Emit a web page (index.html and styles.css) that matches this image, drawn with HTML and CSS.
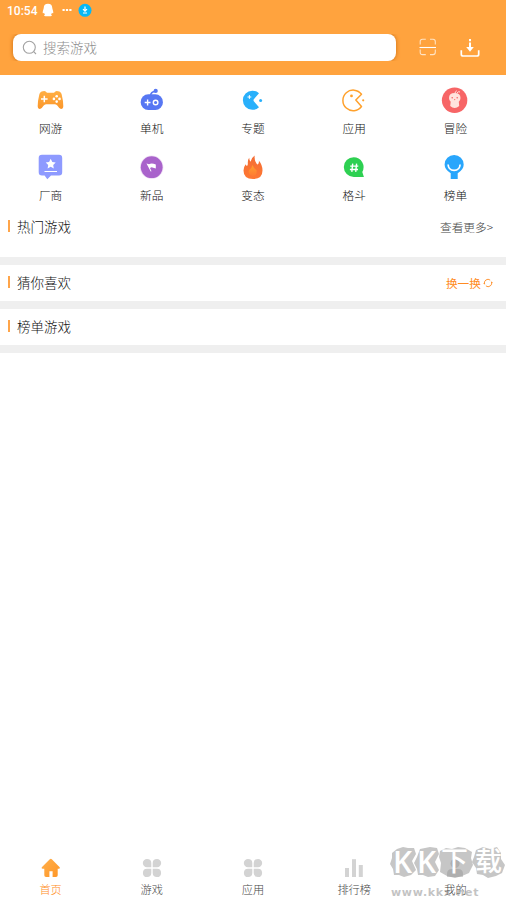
FILE: index.html
```html
<!DOCTYPE html>
<html lang="zh-CN">
<head>
<meta charset="utf-8">
<title>游戏</title>
<link rel="stylesheet" href="styles.css">
</head>
<body>
<div class="app">
  <header class="header">
    <div class="status">
      <span class="time">10:54</span>
      <svg class="penguin" width="12" height="14" viewBox="0 0 12 14"><path fill="#fff" d="M6 .8C3.200.8 1.800 2.300 1.800 4.500C1.800 6 .8 7.300.7 9.500C.7 10.600 1.300 10.500 2 9.800C2.200 10.700 2.600 11.200 3 11.600C1.600 12.200 2 13.300 3.500 13.300L8.500 13.300C10 13.300 10.400 12.200 9 11.600C9.400 11.200 9.800 10.700 10 9.800C10.700 10.500 11.300 10.600 11.300 9.500C11.200 7.300 10.200 6 10.200 4.500C10.200 2.300 8.800.8 6 .8Z"/></svg>
      <svg class="dots" width="10" height="4" viewBox="0 0 10 4" fill="#fff"><rect x=".5" y="0" width="2.200" height="2"/><rect x="3.900" y="0" width="2.200" height="2"/><rect x="7.300" y="0" width="2.200" height="2"/></svg>
      <svg class="badge" width="14" height="14" viewBox="0 0 14 14"><circle cx="7" cy="7.300" r="6.500" fill="#08b8f5"/><path d="M7 3.500V8M5 6.200L7 8.200L9 6.200M5 10H9" stroke="#fff" stroke-width="1.200" fill="none"/></svg>
    </div>
    <div class="tools">
      <div class="search">
        <svg width="16" height="16" viewBox="0 0 16 16" fill="none" stroke="#a2a2a2" stroke-width="1.100"><circle cx="7.300" cy="7.300" r="6"/><path d="M11.700 11.700L14 14"/></svg>
        <span>搜索游戏</span>
      </div>
      <svg class="scan" width="18" height="18" viewBox="0 0 18 18" fill="none" stroke="#ffe3c4" stroke-width="1.100"><path d="M1.200 6.500V3.500Q1.200 1.200 3.500 1.200H6.800M11 1.200H14Q16.300 1.200 16.300 3.500V6.500M16.300 11.500V14.300Q16.300 16.600 14 16.600H11M6.800 16.600H3.500Q1.200 16.600 1.200 14.300V11.500"/><path d="M.5 9.500H17" stroke="#fff"/></svg>
      <svg class="down" width="20" height="20" viewBox="0 0 20 20" fill="none" stroke="#fff"><path d="M1.300 12.300V16.200Q1.300 18 3.100 18H16.900Q18.700 18 18.700 16.200V12.300" stroke-width="1.700"/><path d="M10 1V3.200M10 4.500V10" stroke-width="2"/><path d="M6.200 9H13.800L10 13.800Z" fill="#fff" stroke="none"/></svg>
    </div>
  </header>

  <nav class="grid">
    <a class="cell"><svg viewBox="0 0 32 32"><defs><linearGradient id="pad" x2="0" y2="1"><stop stop-color="#ffaf45"/><stop offset="1" stop-color="#fb962a"/></linearGradient></defs><path fill="url(#pad)" d="M8 7.200Q10 6.700 11.200 8L12 8.800H19L19.800 8Q21 6.700 23 7.200Q26 7.500 26.700 10.500Q28.300 17 28.300 22Q28.300 25 26 25Q24.500 25 22.500 21.800Q21.500 20.300 20 20.300H11Q9.500 20.300 8.500 21.800Q6.500 25 5 25Q2.700 25 2.700 22Q2.700 17 4.300 10.500Q5 7.500 8 7.200Z"/><path d="M6 15H12.600M9.300 11.700V18.300" stroke="#fff" stroke-width="1.500"/><g fill="#fff"><circle cx="21.700" cy="12.200" r="1.300"/><circle cx="21.700" cy="17.600" r="1.300"/><circle cx="18.900" cy="14.900" r="1.300"/><circle cx="24.500" cy="14.900" r="1.300"/></g></svg><span>网游</span></a>
    <a class="cell"><svg viewBox="0 0 32 32"><rect x="4.700" y="10.300" width="22.200" height="15.700" rx="7.600" fill="#5777f3"/><path d="M14.500 11.500Q14.800 8 19.500 7.300" fill="none" stroke="#5777f3" stroke-width="1.500"/><circle cx="19.700" cy="6.900" r="2.100" fill="#5777f3"/><path d="M8.700 18.500H14.500M11.600 15.600V21.400" stroke="#fff" stroke-width="1.400"/><circle cx="19.600" cy="18.500" r="2.300" fill="none" stroke="#fff" stroke-width="1.400"/></svg><span>单机</span></a>
    <a class="cell"><svg viewBox="0 0 32 32"><path fill="#29b0fb" d="M22 9.200L16.800 15.300Q16.200 16.300 16.800 17.300L22 23.300A9.600 9.600 0 1 1 22 9.200Z"/><circle cx="23.600" cy="16.400" r="1.500" fill="#29b0fb"/><path d="M10.500 13H14.300M12.400 11.100V14.900" stroke="#fff" stroke-width="1"/></svg><span>专题</span></a>
    <a class="cell"><svg viewBox="0 0 32 32"><path fill="none" stroke="#ffa12d" stroke-width="1.500" stroke-linejoin="round" d="M23.500 10.300L17.800 16L23.500 22.500A10.300 10.300 0 1 1 23.500 10.300Z"/><circle cx="13.500" cy="11.900" r="1.400" fill="#ffa12d"/><circle cx="25.200" cy="16.300" r="1.100" fill="#ffa12d"/></svg><span>应用</span></a>
    <a class="cell"><svg viewBox="0 0 32 32"><circle cx="15.600" cy="16.300" r="12.700" fill="#f76566"/><path fill="#ffe3dd" d="M15.700 9Q21.500 9 21.500 14Q21.500 16.400 19.800 17.700L20.200 22Q18 24 15.700 24Q13.300 24 11.200 22L11.700 17.700Q10 16.400 10 14Q10 9 15.700 9Z"/><path d="M16 9.500Q16 7.500 17.800 6.800M18 9Q19.500 7 21 8" fill="none" stroke="#ffe3dd" stroke-width="1"/><g fill="#f76566"><circle cx="13.200" cy="13.800" r=".8"/><circle cx="18.200" cy="13.800" r=".8"/><circle cx="15.700" cy="15.600" r=".6"/></g></svg><span>冒险</span></a>
    <a class="cell"><svg viewBox="0 0 32 32"><path fill="#8e9aff" d="M7 3.700H24Q27.200 3.700 27.200 7V21.300Q27.200 24.600 24 24.600H16L12.300 28.200L9.600 24.600H7Q3.700 24.600 3.700 21.300V7Q3.700 3.700 7 3.700Z"/><path fill="#fff" d="M15.700 7.800L17.300 11L20.700 11.500L18.200 13.900L18.800 17.400L15.700 15.800L12.600 17.400L13.200 13.900L10.700 11.500L14.100 11Z"/><path d="M9.500 20.500H22" stroke="#fff" stroke-width="1"/></svg><span>厂商</span></a>
    <a class="cell"><svg viewBox="0 0 32 32"><circle cx="15.700" cy="16.200" r="11.700" fill="#efe0f5"/><circle cx="15.700" cy="16.200" r="10.900" fill="#a963cb"/><path fill="#fff" d="M10.500 12.600L13 13.200Q15.500 11.800 19.800 13.400V17.500L15.500 16.200L14 17L15.500 20.300L14.700 20.500Z"/></svg><span>新品</span></a>
    <a class="cell"><svg viewBox="0 0 32 32"><defs><linearGradient id="flame" x2="0" y2="1"><stop stop-color="#f36d36"/><stop offset="1" stop-color="#ff7832"/></linearGradient><linearGradient id="core" x2="0" y2="1"><stop stop-color="#ffa02e"/><stop offset="1" stop-color="#ff7b32"/></linearGradient></defs><path fill="url(#flame)" d="M17.700 4.500Q17 9 19.800 13Q20.700 14 21.500 12.500Q22.200 11 21.800 9.500Q25.500 14 25.500 19.500Q25.500 28 16 28Q6.500 28 6.500 19.500Q6.500 16 8.700 13.200Q9 15 10.200 14.700Q11 14.200 10.800 11.500Q10.700 8.500 12.200 6.800Q12.300 9.800 13.500 10.700Q14.600 6.500 17.700 4.500Z"/><path fill="url(#core)" d="M15.500 14Q16.500 17 19.500 19Q20.500 25 15.500 25Q10.500 24 12 19Q15 17 15.500 14Z"/></svg><span>变态</span></a>
    <a class="cell"><svg viewBox="0 0 32 32"><path fill="#2ed052" d="M15.700 6.200A9.900 9.900 0 0 1 24.300 21L25.900 26H15.700A9.900 9.900 0 0 1 15.700 6.200Z"/><path d="M14.700 12.600L13.800 20.900M18.600 12.600L17.700 20.900M12.200 15.100H20.300M11.900 18.500H20" stroke="#fff" stroke-width="1.400"/></svg><span>格斗</span></a>
    <a class="cell"><svg viewBox="0 0 32 32"><path fill="#29a6fc" d="M15.100 4A9.500 9.500 0 0 1 24.700 13.500Q24.700 18.500 18.700 22.300V28H11.700V22.300Q5.600 18.500 5.600 13.500A9.500 9.500 0 0 1 15.100 4Z"/><path d="M9.100 13.500Q9.400 19.300 15.100 19.300Q20.800 19.300 21.100 13.500" fill="none" stroke="#fff" stroke-width="1.700"/></svg><span>榜单</span></a>
  </nav>

  <main>
    <section class="panel hot"><h2>热门游戏</h2><a class="more">查看更多&gt;</a></section>
    <section class="panel guess"><h2>猜你喜欢</h2><a class="swap">换一换<svg width="10" height="10" viewBox="0 0 10 10" fill="none" stroke="#ff8b22" stroke-width=".9"><path d="M1.600 6.200A3.600 3.600 0 0 1 7.200 2.100M8.500 3.800A3.600 3.600 0 0 1 2.900 7.900M.7 5L1.600 6.200M9.400 5L8.500 3.800"/></svg></a></section>
    <section class="panel rank"><h2>榜单游戏</h2></section>
  </main>

  <footer class="tabs">
    <a class="tab active"><svg viewBox="0 0 20 20"><defs><linearGradient id="home" x2="1" y2="1"><stop stop-color="#ffb04c"/><stop offset="1" stop-color="#ff9626"/></linearGradient></defs><path fill="url(#home)" d="M8.800 1.200Q9.800.3 10.800 1.200L18.700 9.300Q19.400 10.600 18 10.700H16.700V17.300Q16.700 19 15 19H11.600V13.200H8.400V19H5Q3.300 19 3.300 17.300V10.700H1.500Q.1 10.600.8 9.300Z"/></svg><span>首页</span></a>
    <a class="tab"><svg viewBox="0 0 20 20" fill="#d3d3d3"><path d="M5 .9Q9.300.9 9.300 5V9.300H5A4.200 4.200 0 0 1 5 .9ZM15 .9A4.200 4.200 0 0 1 15 9.300H10.700V5Q10.700.9 15 .9ZM5 10.700H9.300V15A4.200 4.200 0 1 1 5 10.700ZM10.700 10.700H15A4.200 4.200 0 1 1 10.700 15Z"/></svg><span>游戏</span></a>
    <a class="tab"><svg viewBox="0 0 20 20" fill="#d3d3d3"><path d="M5 .9Q9.300.9 9.300 5V9.300H5A4.200 4.200 0 0 1 5 .9ZM15 .9A4.200 4.200 0 0 1 15 9.300H10.700V5Q10.700.9 15 .9ZM5 10.700H9.300V15A4.200 4.200 0 1 1 5 10.700ZM10.700 10.700H15A4.200 4.200 0 1 1 10.700 15Z"/></svg><span>应用</span></a>
    <a class="tab"><svg viewBox="0 0 20 20" fill="#d3d3d3"><rect x="1" y="10" width="4" height="9"/><rect x="8" y="1.200" width="4" height="17.800"/><rect x="14.800" y="7" width="4" height="12"/></svg><span>排行榜</span></a>
    <a class="tab"><svg viewBox="0 0 20 20" fill="#d3d3d3"><circle cx="10" cy="5.500" r="4.600"/><path d="M2 19V16Q2 11 7 11H13Q18 11 18 16V19Z"/></svg><span>我的</span></a>
  </footer>

  <div class="watermark">
    <svg width="117" height="38" viewBox="0 0 117 38">
      <g fill="#888" fill-opacity=".48">
        <path d="M8 4L14 2L19 3L25 3L27 9L23 16L27 25L22 30L15 32L10 30L5 30L4 24L1 19L3 13L3 8Z"/>
        <path d="M31 4L36 3L41 2L48 3L50 9L46 17L50 25L46 31L39 32L34 30L29 30L28 24L25 18L28 12Z"/>
        <path d="M51 6L57 3L63 4L69 2L76 3L83 7L82 13L84 20L80 28L73 31L66 33L58 31L51 27L52 18L50 12Z"/>
        <path d="M87 5L94 2L101 4L108 2L112 8L112 14L116 20L113 28L107 31L99 33L94 30L88 29L87 23L83 17L85 12Z"/>
      </g>
      <g class="mark">
        <text x="4" y="28">K</text><text x="28" y="28">K</text><text class="cjk" x="52" y="26">下</text><text class="cjk" x="86" y="26">载</text>
      </g>
    </svg>
    <span class="site">www.kkx.net</span>
  </div>
</div>
</body>
</html>
```
FILE: styles.css
```css
* { box-sizing: border-box; }
body { margin: 0; background: #fff; font-family: "Noto Sans CJK SC", sans-serif; font-weight: 300; color: #111; }
svg { display: block; flex: none; }
.app { position: relative; width: 506px; height: 899px; display: flex; flex-direction: column; overflow: hidden; }
.header { height: 75px; background: #ffa33e; flex: none; }
.status { height: 34px; padding: 3px 0 0 7px; display: flex; align-items: flex-start; color: #fff; }
.time { font: 500 12px/16px Roboto, sans-serif; width: 35px; }
.dots { margin: 6px 0 0 8px; }
.badge { margin-left: 6px; }
.tools { display: flex; align-items: center; height: 27px; padding-left: 13px; }
.search { width: 383px; height: 27px; border-radius: 8px; background: #fff; box-shadow: 0 0 4px #c96d13; clip-path: inset(0 -6px); display: flex; align-items: center; padding-left: 9px; gap: 5px; font-size: 13.500px; line-height: 20px; color: #8c8c8c; }
.search span { margin-top: -2px; }
.scan { margin-left: 23px; margin-top: -1px; }
.down { margin-left: 23px; }
.grid { display: grid; grid-template-columns: repeat(5, 1fr); grid-auto-rows: 67px; padding-top: 9px; height: 134px; flex: none; }
.cell { display: flex; flex-direction: column; align-items: center; font-size: 11.700px; line-height: 17px; }
.cell svg { width: 32px; height: 32px; margin-bottom: 3px; }
.panel { display: flex; justify-content: space-between; padding: 8px 13px 0 8px; border-bottom: 8px solid #efefef; }
.panel h2 { margin: -1px 0 0; font-size: 13.500px; font-weight: 300; line-height: 20px; height: 20px; display: flex; align-items: center; }
.panel h2::before { content: ""; width: 2px; height: 12px; background: #ffa54a; margin-right: 7px; }
.hot { height: 56px; }
.guess, .rank { height: 44px; }
.more, .swap { font-size: 11.700px; line-height: 20px; color: #444; }
.swap { display: flex; align-items: center; height: 20px; font-weight: 400; color: #ff8b22; }
.swap svg { margin-left: 2px; }
.tabs { margin-top: auto; height: 41px; display: grid; grid-template-columns: repeat(5, 1fr); flex: none; }
.tab { display: flex; flex-direction: column; align-items: center; font-size: 11.200px; line-height: 17px; color: #444; }
.tab svg { width: 20px; height: 20px; margin-bottom: 3px; }
.tab.active { color: #ff8d1c; }
.watermark { position: absolute; left: 389px; top: 845px; width: 117px; height: 54px; }
.mark { fill: #fff; font: 600 30px "Open Sans", sans-serif; }
.mark .cjk { font: 500 27px "Noto Sans CJK SC", sans-serif; }
.site { display: block; margin: 3px 0 0 2px; font: bold 11px/14px "DejaVu Sans", sans-serif; letter-spacing: .7px; color: rgba(136, 136, 136, .5); white-space: nowrap; }
```
